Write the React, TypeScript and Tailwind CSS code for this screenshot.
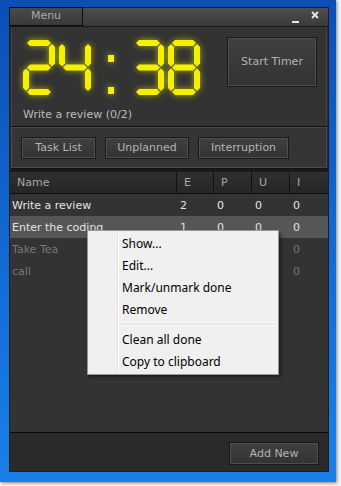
import React from "react";

const SEG = 6;
const W = 32;
const H = 55;

function hSeg(x1: number, x2: number, yc: number) {
  const h = SEG / 2;
  return `${x1},${yc} ${x1 + h},${yc - h} ${x2 - h},${yc - h} ${x2},${yc} ${x2 - h},${yc + h} ${x1 + h},${yc + h}`;
}
function vSeg(xc: number, y1: number, y2: number) {
  const h = SEG / 2;
  return `${xc},${y1} ${xc + h},${y1 + h} ${xc + h},${y2 - h} ${xc},${y2} ${xc - h},${y2 - h} ${xc - h},${y1 + h}`;
}

const g = 1;
const segs: Record<string, string> = {
  a: hSeg(3 + g, W - 3 - g, 3),
  g: hSeg(3 + g, W - 3 - g, H / 2),
  d: hSeg(3 + g, W - 3 - g, H - 3),
  f: vSeg(3, 3 + g, H / 2 - g),
  b: vSeg(W - 3, 3 + g, H / 2 - g),
  e: vSeg(3, H / 2 + g, H - 3 - g),
  c: vSeg(W - 3, H / 2 + g, H - 3 - g),
};

const digitMap: Record<string, string> = {
  "2": "abged",
  "4": "fgbc",
  "3": "abgcd",
  "8": "abcdefg",
};

function Digit({ d, x }: { d: string; x: number }) {
  return (
    <g transform={`translate(${x},0)`}>
      {digitMap[d].split("").map((s) => (
        <polygon key={s} points={segs[s]} fill="#f3f000" />
      ))}
    </g>
  );
}

function Clock() {
  return (
    <svg
      width="182"
      height="57"
      viewBox="0 0 182 57"
      className="drop-shadow-[0_0_3px_rgba(220,220,0,0.75)]"
    >
      <Digit d="2" x={0} />
      <Digit d="4" x={36} />
      <rect x="85" y="15" width="6" height="7" fill="#f3f000" />
      <rect x="85" y="47" width="6" height="7" fill="#f3f000" />
      <Digit d="3" x={109} />
      <Digit d="8" x={145} />
    </svg>
  );
}

function DarkButton({
  children,
  className,
}: {
  children: React.ReactNode;
  className: string;
}) {
  return (
    <div
      className={`flex items-center justify-center pt-[1px] border border-[#1a1a1a] bg-gradient-to-b from-[#404040] to-[#333333] shadow-[inset_0_0_0_1px_#4e4e4e] text-[#b4b4b4] ${className}`}
    >
      {children}
    </div>
  );
}

const rows = [
  { name: "Write a review", v: ["2", "0", "0", "0"], done: false, sel: false },
  { name: "Enter the coding", v: ["1", "0", "0", "0"], done: false, sel: true },
  { name: "Take Tea", v: ["1", "0", "0", "0"], done: true, sel: false },
  { name: "call", v: ["1", "0", "0", "0"], done: true, sel: false },
];

export default function App() {
  return (
    <div
      className="relative w-[341px] h-[486px] overflow-hidden bg-[#f2f2f2] text-[11px]"
      style={{ fontFamily: '"DejaVu Sans", Verdana, sans-serif' }}
    >
      <div className="w-[336px] h-[482px] bg-gradient-to-b from-[#0b4fb6] via-[#1468d2] to-[#1b80e8] shadow-[1px_1px_3px_rgba(0,0,0,0.45)] pt-[7px] pl-[9px]">
        <div className="w-[320px] h-[465px] flex flex-col bg-[#2a2a2a] border border-[#1e1e1e]">
          {/* title bar */}
          <div className="h-[19px] flex items-stretch bg-gradient-to-b from-[#4e4e4e] to-[#3a3a3a] border-b border-[#151515]">
            <div className="w-[74px] -ml-[1px] -mt-[1px] border border-[#0a0a0a] flex items-center justify-center text-[#a9a9a9] bg-gradient-to-b from-[#4a4a4a] to-[#3a3a3a]">
              Menu
            </div>
            <div className="flex-1" />
            <div className="flex items-center gap-[12px] pr-[9px]">
              <svg width="7" height="14" viewBox="0 0 7 14">
                <rect x="0" y="11" width="7" height="2" fill="#e6e6e6" />
              </svg>
              <svg width="8" height="14" viewBox="0 0 8 14">
                <path d="M1 2 L7 8 M7 2 L1 8" stroke="#e6e6e6" strokeWidth="1.8" />
              </svg>
            </div>
          </div>

          {/* top panel */}
          <div className="mx-[1px] h-[99px] flex bg-[#333333] border-x border-[#444444] pl-[10px] pr-[9px] pt-[10px]">
            <div className="flex-1 flex flex-col">
              <div className="mt-[3px] ml-[1px]">
                <Clock />
              </div>
              <div className="mt-[11px] ml-[1px] text-[#bcbcbc] leading-[14px]">
                Write a review (0/2)
              </div>
            </div>
            <DarkButton className="w-[90px] h-[50px] text-[11px]">Start Timer</DarkButton>
          </div>

          {/* panel 2 */}
          <div className="mx-[1px] h-[43px] flex items-center gap-[9px] bg-[#353535] border-y border-[#111111] shadow-[inset_0_0_0_1px_#4a4a4a] pl-[10px]">
            <DarkButton className="w-[75px] h-[22px]">Task List</DarkButton>
            <DarkButton className="w-[84px] h-[22px]">Unplanned</DarkButton>
            <DarkButton className="w-[91px] h-[22px]">Interruption</DarkButton>
          </div>

          <div className="h-[3px] bg-[#1a1a1a]" />

          {/* table */}
          <div className="flex-1 flex flex-col bg-[#333333]">
            <div className="h-[22px] grid grid-cols-[167px_37px_38px_38px_38px] bg-gradient-to-b from-[#303030] to-[#262626] border-b border-[#111111] text-[#a8a8a8]">
              <div className="flex items-center pt-[2px] pl-[7px] border-r border-[#111111]">Name</div>
              <div className="flex items-center pt-[2px] pl-[7px] border-r border-[#111111]">E</div>
              <div className="flex items-center pt-[2px] pl-[7px] border-r border-[#111111]">P</div>
              <div className="flex items-center pt-[2px] pl-[7px] border-r border-[#111111]">U</div>
              <div className="flex items-center pt-[2px] pl-[7px]">I</div>
            </div>
            {rows.map((r) => (
              <div
                key={r.name}
                className={`h-[22px] pt-[2px] grid grid-cols-[167px_37px_38px_38px_38px] items-center ${
                  r.sel ? "bg-[#565656]" : "bg-[#333333]"
                } ${r.done ? "text-[#777777]" : "text-[#e4e4e4]"}`}
              >
                <div className="pl-[2px]">{r.name}</div>
                {r.v.map((v, i) => (
                  <div key={i} className="pl-[3px]">
                    {v}
                  </div>
                ))}
              </div>
            ))}
            <div className="flex-1" />
          </div>

          <div className="h-[1px] bg-[#0a0a0a]" />

          {/* bottom bar */}
          <div className="h-[38px] flex justify-end pt-[9px] pr-[9px] bg-[#2a2a2a]">
            <DarkButton className="w-[90px] h-[23px] from-[#363636] to-[#2c2c2c]">Add New</DarkButton>
          </div>
        </div>
      </div>

      {/* context menu */}
      <div
        className="absolute left-[87px] top-[230px] w-[192px] h-[145px] bg-[#f0f0f0] border border-[#979797] shadow-[2px_2px_3px_rgba(0,0,0,0.45)] pt-[2px] text-[12px] text-black"
        style={{ fontFamily: '"Noto Sans", "Open Sans", sans-serif' }}
      >
        <div className="absolute left-[29px] top-[2px] bottom-[2px] w-[2px] border-l border-[#e2e3e3] bg-[#ffffff] border-r-0" />
        {["Show...", "Edit...", "Mark/unmark done", "Remove"].map((t) => (
          <div key={t} className="h-[22px] flex items-center pl-[34px] relative">
            {t}
          </div>
        ))}
        <div className="h-[8px] flex items-center pl-[31px] pr-[2px] relative">
          <div className="w-full border-t border-[#e0e0e0] border-b-white h-[2px] border-b" />
        </div>
        {["Clean all done", "Copy to clipboard"].map((t) => (
          <div key={t} className="h-[22px] flex items-center pl-[34px] relative">
            {t}
          </div>
        ))}
      </div>
    </div>
  );
}
